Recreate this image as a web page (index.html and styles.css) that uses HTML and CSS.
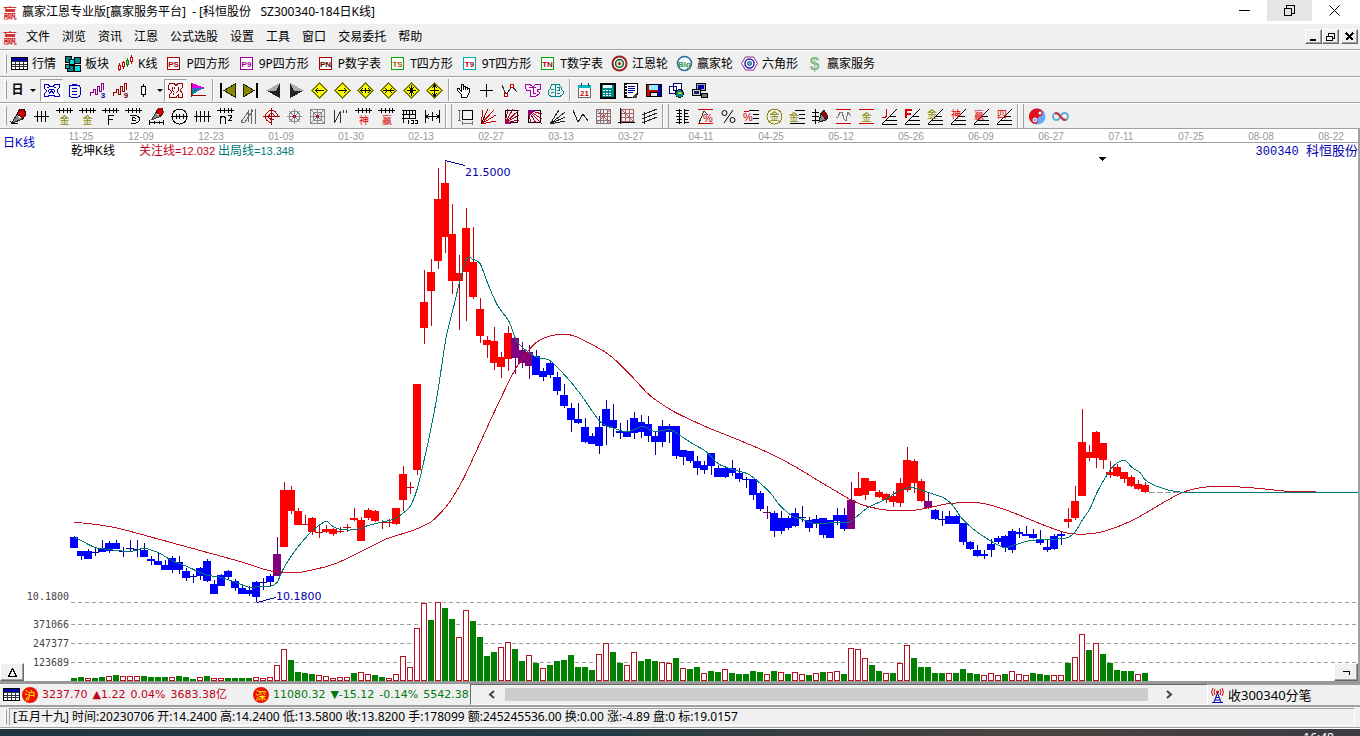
FILE: index.html
```html
<!DOCTYPE html>
<html lang="zh-CN">
<head>
<meta charset="utf-8">
<title>赢家江恩专业版</title>
<link rel="stylesheet" href="styles.css">
</head>
<body>
<svg class="sprite" aria-hidden="true">
<defs>
<g id="comb"><path d="M0 2.500H17M3.500 0V5M7.500 0V5M11.500 0V5M14.500 0V5" stroke="#000"/></g>
<g id="fan"><path d="M1 16 16 1M1 16.500H16M5 12.500H16M9 8.500H15" stroke="#000"/></g>
<g id="pen"><path d="M2 15 7 6 13 11Z" fill="#888" stroke="#222"/><path d="M7 6 10 1 14 1 16 6 13 11Z" fill="#c00" stroke="#300"/><path d="M8 8 11 10" stroke="#fff"/></g>
<g id="diamond"><path d="M8.500 1 16 8.500 8.500 16 1 8.500Z" fill="#ff0" stroke="#770"/></g>
<symbol id="table" viewBox="0 0 17 17"><path d="M.5 2.500H16.500V14.500H.5Z" fill="#fff" stroke="#000"/><path d="M1 3H16V5.500H1Z" fill="#00a"/><path d="M1 6.500H16M1 9H16M1 11.500H16M4.500 6V14M8.500 6V14M12.500 6V14" stroke="#333"/></symbol>
<symbol id="blocks" viewBox="0 0 17 17"><g stroke="#000"><path d="M1 1H7V7H1ZM10 2H16V8H10ZM3 10H9V16H3Z" fill="#088"/><path d="M5 4H10V9H5ZM10 10H16V16H10Z" fill="#0dd"/><path d="M1 9H5V13H1Z" fill="#0aa"/></g></symbol>
<symbol id="kline" viewBox="0 0 17 17"><path d="M2.500 8V16M6.500 6V14M14.500 0V9" stroke="#c00"/><path d="M1.500 10.500H3.500V14.500H1.500ZM5.500 7.500H7.500V11.500H5.500ZM13.500 2.500H15.500V6.500H13.500Z" fill="#fff" stroke="#c00"/><path d="M10.500 3V12" stroke="#080"/><path d="M9.500 5.500H11.500V9.500H9.500Z" fill="#8c8" stroke="#080"/></symbol>
<symbol id="ps" viewBox="0 0 17 17"><path d="M2.500 2.500H14.500V14.500H2.500Z" fill="#fff" stroke="#a00"/><text x="8.500" y="12" class="tag" fill="#a00">PS</text></symbol>
<symbol id="p9" viewBox="0 0 17 17"><path d="M2.500 2.500H14.500V14.500H2.500Z" fill="#fff" stroke="#909"/><text x="8.500" y="12" class="tag" fill="#909">P9</text></symbol>
<symbol id="pn" viewBox="0 0 17 17"><path d="M2.500 2.500H14.500V14.500H2.500Z" fill="#fff" stroke="#a00"/><text x="8.500" y="12" class="tag" fill="#400">PN</text></symbol>
<symbol id="ts" viewBox="0 0 17 17"><path d="M2.500 2.500H14.500V14.500H2.500Z" fill="#fff" stroke="#0a0"/><text x="8.500" y="12" class="tag" fill="#a50">TS</text></symbol>
<symbol id="t9" viewBox="0 0 17 17"><path d="M2.500 2.500H14.500V14.500H2.500Z" fill="#fff" stroke="#0aa"/><text x="8.500" y="12" class="tag" fill="#a02">T9</text></symbol>
<symbol id="tn" viewBox="0 0 17 17"><path d="M2.500 2.500H14.500V14.500H2.500Z" fill="#fff" stroke="#0a0"/><text x="8.500" y="12" class="tag" fill="#a02">TN</text></symbol>
<symbol id="wheel" viewBox="0 0 17 17"><circle cx="8.500" cy="8.500" r="7" fill="#fff" stroke="#922" stroke-width="2"/><circle cx="8.500" cy="8.500" r="4" fill="#cec" stroke="#253" stroke-width="1.500"/><circle cx="8.500" cy="8.500" r="1.500" fill="#b22"/></symbol>
<symbol id="big" viewBox="0 0 17 17"><circle cx="8.500" cy="8.500" r="7" fill="#eff" stroke="#369" stroke-width="1.500"/><text x="8.500" y="12" class="tag" fill="#384">Big</text></symbol>
<symbol id="hex" viewBox="0 0 17 17"><path d="M4.500 2H12.500L16.500 8.500 12.500 15H4.500L.5 8.500Z" fill="#fff" stroke="#927"/><circle cx="8.500" cy="8.500" r="4.500" fill="none" stroke="#22b" stroke-width="1.500"/><circle cx="8.500" cy="8.500" r="2" fill="#6bd" stroke="#248"/></symbol>
<symbol id="dollar" viewBox="0 0 17 17"><text x="8.500" y="15" class="money" fill="#8b8">$</text></symbol>

<symbol id="maze" viewBox="0 0 17 17"><path d="M1 2.500H5L7 4.500H10L12 2.500H16V6L14 8V10L16 12V14.500H12L11 13H6L5 14.500H1V12L3 10V8L1 6ZM5 9.500 7 7H10L12 9.500M6 11.500 8.500 9 11 11.500M4 5.500H6M11 5.500H13" fill="none" stroke="#00c"/></symbol>
<symbol id="clip" viewBox="0 0 17 17"><rect x="3" y="3" width="11" height="12" rx="2" fill="none" stroke="#00c"/><path d="M6 2.500H11M6 6.500H11M6 9.500H11M6 12H11" stroke="#00c"/></symbol>
<symbol id="wave3" viewBox="0 0 17 17"><path d="M1.500 14V10.500H4.500V7.500H6.500V12.500H8.500V4.500H10.500V9.500H12.500V1.500H14.500V8" fill="none" stroke="#808"/><text x="14" y="16" class="tag" fill="#00a">3</text></symbol>
<symbol id="wave9" viewBox="0 0 17 17"><path d="M1.500 14V10.500H4.500V7.500H6.500V12.500H8.500V4.500H10.500V9.500H12.500V1.500H14.500V8" fill="none" stroke="#900"/><text x="14" y="16" class="tag" fill="#600">9</text></symbol>
<symbol id="onebar" viewBox="0 0 17 17"><path d="M8.500 2V15" stroke="#000"/><path d="M6.500 4.500H10.500V12.500H6.500Z" fill="#fff" stroke="#000"/></symbol>
<symbol id="puzzle" viewBox="0 0 17 17"><path d="M3 1.500H7L9 3.500 11 1.500H15V6L13 8L15 11V15.500H11V13L9 15.500H3L2 13L4 11V9L1.500 7V4ZM5 5V8L7 10M8 5 7 7M6 13V11M11 5V9L9 11" fill="none" stroke="#900"/></symbol>
<symbol id="flag" viewBox="0 0 17 17"><path d="M2 1 15 6H2Z" fill="#d0d"/><path d="M2 6H15L8 9H2Z" fill="#36b"/><path d="M2 9H8L2 13Z" fill="#088"/><path d="M1.500 1V14.500M1 13.500H16" stroke="#900"/></symbol>
<symbol id="first" viewBox="0 0 17 17"><path d="M2 1V16" stroke="#000" stroke-width="2"/><path d="M16 2V15L5 8.500Z" fill="#880" stroke="#220"/></symbol>
<symbol id="last" viewBox="0 0 17 17"><path d="M15 1V16" stroke="#000" stroke-width="2"/><path d="M1 2V15L12 8.500Z" fill="#880" stroke="#220"/></symbol>
<symbol id="prev" viewBox="0 0 17 17"><path d="M15 1 1 8.500H11Z" fill="#aaa"/><path d="M1 8.500 15 16V1L11 8.500Z" fill="#222"/></symbol>
<symbol id="next" viewBox="0 0 17 17"><path d="M2 1 16 8.500H6Z" fill="#aaa"/><path d="M16 8.500 2 16V1L6 8.500Z" fill="#222"/></symbol>
<symbol id="d1" viewBox="0 0 17 17"><use href="#diamond"/><path d="M4 8.500H13M7 6 4.500 8.500 7 11" fill="none" stroke="#000"/></symbol>
<symbol id="d2" viewBox="0 0 17 17"><use href="#diamond"/><path d="M4 8.500H13M10 6 12.500 8.500 10 11" fill="none" stroke="#000"/></symbol>
<symbol id="d3" viewBox="0 0 17 17"><use href="#diamond"/><path d="M4 8.500H13M6 6 4 8.500 6 11M11 6 13 8.500 11 11M8.500 6V11" fill="none" stroke="#000"/></symbol>
<symbol id="d4" viewBox="0 0 17 17"><use href="#diamond"/><path d="M3 8.500H14M5 6 7.500 8.500 5 11M12 6 9.500 8.500 12 11" fill="none" stroke="#000"/></symbol>
<symbol id="d5" viewBox="0 0 17 17"><use href="#diamond"/><path d="M4 8.500H13M8.500 3V14M6 5 8.500 8 11 5M6 12 8.500 9 11 12" fill="none" stroke="#000"/></symbol>
<symbol id="d6" viewBox="0 0 17 17"><use href="#diamond"/><path d="M4 8.500H13M8.500 3V14M6 6 8.500 3 11 6M6 11 8.500 14 11 11" fill="none" stroke="#000"/></symbol>
<symbol id="hand" viewBox="0 0 17 17"><path d="M6 15V12L2 8V6.500H4L6 9V2H8V8 4H10V8 5H12V8 6H14V11L12 15Z" fill="#fff" stroke="#000"/></symbol>
<symbol id="cross" viewBox="0 0 17 17"><path d="M8.500 2V15M2 8.500H15" stroke="#000"/></symbol>
<symbol id="nodes" viewBox="0 0 17 17"><path d="M1 3 5 13 11 4 16 10" fill="none" stroke="#333"/><g fill="#fff" stroke="#c00"><circle cx="5" cy="13" r="2"/><circle cx="11" cy="4" r="2"/></g></symbol>
<symbol id="shirt" viewBox="0 0 17 17"><path d="M1.500 2.500H6L8 4H10L12 2.500H16.500V7.500H13V9L15 10V12L11 14.500H6V8.500H3L1.500 6.500ZM5 5.500H12M9 6V11H12" fill="none" stroke="#a0a"/></symbol>
<symbol id="brain" viewBox="0 0 17 17"><path d="M8 1.500V15M8 2.500H5L3 5V7L1 9V12L4 14.500H8M9 2.500H12L14 5V7L16 9V12L13 14.500H9M4 7.500H7M4 10.500H7M10 5.500H12V8.500H10M10 11.500H13" fill="none" stroke="#088"/></symbol>
<symbol id="cal" viewBox="0 0 17 17"><path d="M2.500 3.500H14.500V15.500H2.500Z" fill="#fff" stroke="#666"/><path d="M2 3H15V6H2Z" fill="#0bb"/><path d="M5 1V4M12 1V4" stroke="#333"/><text x="8.500" y="14" class="tag" fill="#c00">21</text></symbol>
<symbol id="calc" viewBox="0 0 17 17"><path d="M1.500 1.500H15.500V15.500H1.500Z" fill="#088" stroke="#000" stroke-width="2"/><path d="M4 3H13V6H4Z" fill="#dff"/><path d="M4 8.500H13M4 11H13M4 13.500H13" stroke="#fff" stroke-dasharray="2 1"/></symbol>
<symbol id="note" viewBox="0 0 17 17"><path d="M2.500 1.500H15.500V12L12 15.500H2.500Z" fill="#fff" stroke="#000"/><path d="M3.500 1V16" stroke="#000" stroke-width="2" stroke-dasharray="2 1"/><path d="M6 4.500H13M6 6.500H13M6 8.500H13M6 10.500H11" stroke="#00a"/><path d="M15 10V16H9Z" fill="#444"/></symbol>
<symbol id="disk" viewBox="0 0 17 17"><path d="M1.500 2.500H16V14.500H1.500Z" fill="#c00" stroke="#000"/><path d="M4 3H13V8H4Z" fill="#8ef"/><path d="M13 3H16V14H13Z" fill="#00a"/><path d="M5 10H12V14H5Z" fill="#eee" stroke="#000"/></symbol>
<symbol id="globe" viewBox="0 0 17 17"><path d="M5.500 1.500H13.500V8.500H5.500ZM1.500 4.500H8.500V11.500H1.500Z" fill="#fff" stroke="#008"/><circle cx="11.500" cy="11.500" r="4" fill="#088" stroke="#000"/><path d="M9 12 12 9 14 12Z" fill="#dd0"/></symbol>
<symbol id="pcs" viewBox="0 0 17 17"><path d="M5.500 1.500H14.500V8.500H5.500Z" fill="#aac" stroke="#000"/><path d="M7 3H13V7H7Z" fill="#00a"/><path d="M1.500 7.500H9.500V13.500H1.500Z" fill="#ccc" stroke="#000"/><path d="M3 9H8V12H3Z" fill="#226"/><path d="M10 11H16V15H10Z" fill="#777" stroke="#000"/></symbol>

<symbol id="pencil" viewBox="0 0 17 17"><use href="#pen"/><path d="M0 13Q3 17 8 15" fill="none" stroke="#000"/></symbol>
<symbol id="ticks" viewBox="0 0 17 17"><path d="M1 8.500H16M4.500 3V14M8.500 3V14M12.500 3V14" stroke="#000"/></symbol>
<symbol id="goldA" viewBox="0 0 17 17"><use href="#comb"/><text x="8.500" y="16" class="han" fill="#880">金</text></symbol>
<symbol id="combF" viewBox="0 0 17 17"><use href="#comb"/><path d="M6.500 17V7.500H12M6.500 11.500H11" fill="none" stroke="#000"/></symbol>
<symbol id="spiral" viewBox="0 0 17 17"><use href="#comb"/><path d="M5 7.500H11Q16 9 14 13Q12 16 6 15.500M11 11Q8 8 7 11Q8 14 11 12" fill="none" stroke="#000"/></symbol>
<symbol id="penline" viewBox="0 0 17 17"><g transform="translate(2 -1) scale(.85)"><use href="#pen"/></g><path d="M1 14.500H16M1.500 12V17M15.500 12V17M6 13V16M11 13V16" stroke="#000"/></symbol>
<symbol id="roundTicks" viewBox="0 0 17 17"><circle cx="8.500" cy="8.500" r="7.500" fill="none" stroke="#000"/><path d="M0 8.500H17M5 6V11M8.500 6V11M12 6V11" stroke="#000"/></symbol>
<symbol id="ticks4" viewBox="0 0 17 17"><path d="M0 8.500H17M2.500 3V14M6.500 3V14M10.500 3V14M14.500 3V14" stroke="#000"/></symbol>
<symbol id="nsq" viewBox="0 0 17 17"><use href="#comb"/><path d="M3.500 16V8M3.500 10 5 8.500H7L8.500 10V16M11 7.500H14.500V9L11.500 12.500H15" fill="none" stroke="#000"/></symbol>
<symbol id="slant" viewBox="0 0 17 17"><path d="M1 14 8 4V14M1 14H5L13 2M11.500 1V16M15.500 1V16" fill="none" stroke="#666"/></symbol>
<symbol id="target" viewBox="0 0 17 17"><path d="M0 8.500H17M8.500 0V17" stroke="#a00"/><path d="M14.500 8A6 6 0 1 0 8 14.500M11.500 8Q11 5.500 8 5.500Q5 7 6 10Q8 12 11 11" fill="none" stroke="#a00"/></symbol>
<symbol id="gannRound" viewBox="0 0 17 17"><path d="M1 8.500H16M8.500 1V16M3 3 14 14M14 3 3 14" stroke="#888"/><circle cx="8.500" cy="8.500" r="5.500" fill="none" stroke="#888"/><circle cx="8.500" cy="8.500" r="2" fill="#a23"/></symbol>
<symbol id="gannSquare" viewBox="0 0 17 17"><path d="M1.500 1.500H15.500V15.500H1.500ZM4.500 4.500H12.500V12.500H4.500ZM1 1 16 16M16 1 1 16M8.500 1V16M1 8.500H16" fill="none" stroke="#888"/><path d="M7 7H10V10H7Z" fill="#a23"/></symbol>
<symbol id="nmark" viewBox="0 0 17 17"><path d="M2.500 2V15L8.500 3V15M11.500 2V5M14.500 2V5" fill="none" stroke="#333"/></symbol>
<symbol id="combShen" viewBox="0 0 17 17"><use href="#comb"/><text x="9" y="16" class="han" fill="#d00">神</text></symbol>
<symbol id="combYing" viewBox="0 0 17 17"><use href="#comb"/><text x="9" y="16" class="han" fill="#d00">赢</text></symbol>
<symbol id="ruler" viewBox="0 0 17 17"><path d="M1 2.500H15M1 6.500H15M1 10.500H15M2.500 2V15M5.500 2V6M8.500 2V10M11.500 2V6M14.500 2V10M7.500 12V16M10 12.500H12V15.500H10M14 12.500H16V15.500H14" fill="none" stroke="#000"/></symbol>
<symbol id="span" viewBox="0 0 17 17"><path d="M1.500 2V15M15.500 2V15M8.500 4V13M2 8.500H15M5 6 2 8.500 5 11M12 6 15 8.500 12 11" fill="none" stroke="#000"/></symbol>
<symbol id="crop" viewBox="0 0 17 17"><path d="M5.500 2.500H15.500V11.500H5.500Z" fill="none" stroke="#000"/><path d="M2.500 2V12M1 2.500H4M1 12H4M5 15H16M5.500 13V17M15.500 13V17" stroke="#777"/></symbol>
<symbol id="rays" viewBox="0 0 17 17"><path d="M1 16 3 2M1 16 8 1M1 16 14 2M1 16 16 7M1 16 16 13" stroke="#c00"/><path d="M1 16 5 8" stroke="#000"/></symbol>
<symbol id="rayBox" viewBox="0 0 17 17"><path d="M2.500 2.500H14.500V14.500H2.500Z" fill="none" stroke="#000"/><path d="M2 15 5 1M2 15 10 1M2 15 16 2M2 15 16 7M2 15 16 12" stroke="#a02"/><path d="M2 10 7 15M2 15H8" stroke="#a0a"/></symbol>
<symbol id="rayBox2" viewBox="0 0 17 17"><path d="M2.500 2.500H14.500V14.500H2.500Z" fill="none" stroke="#000"/><path d="M2 2 5 15M2 2 10 15M2 2 16 16M2 2 16 11M2 2 16 6" stroke="#a02"/><path d="M2 3H9M3 2V8" stroke="#808" stroke-width="2"/></symbol>
<symbol id="rays3" viewBox="0 0 17 17"><path d="M1 16 10 2M1 16 16 4M1 16 16 9M1 16 16 13" stroke="#222"/></symbol>
<symbol id="vee" viewBox="0 0 17 17"><path d="M1 2 6 14 11 6 16 13" fill="none" stroke="#222"/></symbol>
<symbol id="grid" viewBox="0 0 17 17"><path d="M1.500 1.500H15.500V15.500H1.500ZM1 5H16M1 12H16M5 1V16M12 1V16" fill="none" stroke="#777"/><path d="M8.500 1V16M1 8.500H16M1 1 16 16M16 1 1 16" stroke="#b66"/></symbol>
<symbol id="grid2" viewBox="0 0 17 17"><path d="M3.500 1.500H15.500V13.500H3.500ZM3 5H16M3 9.500H16M7.500 1V14M11.500 1V14M3 1 16 14" fill="none" stroke="#a66"/><path d="M2.500 0V16M0 14.500H17" stroke="#000"/></symbol>
<symbol id="channels" viewBox="0 0 17 17"><path d="M1 7 16 1M1 11 16 5M1 15 16 9M3.500 4V16" stroke="#222"/></symbol>
<symbol id="ladder" viewBox="0 0 17 17"><path d="M5.500 1V16M10.500 1V16M2 2.500H8M3 5.500H8M2 8.500H8M3 11.500H8M2 14.500H8M10 2.500H15M10 5.500H14M10 8.500H15M10 11.500H14M10 14.500H15" stroke="#000"/></symbol>
<symbol id="pctFan" viewBox="0 0 17 17"><path d="M1 1.500H16M1 15.500H16" stroke="#c00"/><path d="M2 15 7 3 11 7" fill="none" stroke="#333"/><text x="11" y="14" class="sign" fill="#c00">%</text></symbol>
<symbol id="pct" viewBox="0 0 17 17"><path d="M13 2 4 15" stroke="#000"/><g fill="none" stroke="#000"><circle cx="4.500" cy="5" r="2.500"/><circle cx="12.500" cy="12" r="2.500"/></g></symbol>
<symbol id="pctLines" viewBox="0 0 17 17"><path d="M6 2.500H16M10 6.500H16M10 10.500H16M1 15.500H16" stroke="#000"/><path d="M1 3.500H6" stroke="#c00"/><text x="5" y="13" class="sign" fill="#c00">%</text></symbol>
<symbol id="goldRound" viewBox="0 0 17 17"><circle cx="8.500" cy="8.500" r="7.500" fill="none" stroke="#880"/><text x="8.500" y="12" class="han" fill="#880">金</text></symbol>
<symbol id="goldLines" viewBox="0 0 17 17"><path d="M6 2.500H16M10 6.500H16M10 10.500H16M1 15.500H16" stroke="#000"/><text x="5" y="13" class="han" fill="#880">金</text></symbol>
<symbol id="penTicks" viewBox="0 0 17 17"><path d="M3.500 1V16M0 4.500H7M0 8.500H7M0 12.500H7" stroke="#000"/><path d="M7 14 9 5 14 12Z" fill="#888" stroke="#222"/><path d="M9 5 12 2 16 9 14 12Z" fill="#a00" stroke="#222"/></symbol>
<symbol id="sine" viewBox="0 0 17 17"><path d="M1 1.500H16M1 15.500H16" stroke="#c00"/><path d="M1 9H3L5 4H7L9 11 11 13 13 4 16 8" fill="none" stroke="#777"/></symbol>
<symbol id="goldBand" viewBox="0 0 17 17"><path d="M1 1.500H16M1 15.500H16" stroke="#c00"/><text x="8.500" y="13" class="han" fill="#880">金</text></symbol>
<symbol id="fanJ" viewBox="0 0 17 17"><use href="#fan"/><path d="M5.500 1V8L4 9.500H1" fill="none" stroke="#c00"/></symbol>
<symbol id="fanF" viewBox="0 0 17 17"><use href="#fan"/><path d="M2 10V2H8M2 6H7" fill="none" stroke="#c00" stroke-width="2"/></symbol>
<symbol id="fanGold" viewBox="0 0 17 17"><use href="#fan"/><text x="5" y="10" class="han" fill="#880">金</text></symbol>
<symbol id="fanShen" viewBox="0 0 17 17"><use href="#fan"/><text x="6" y="10" class="han" fill="#d00">神</text></symbol>
<symbol id="fanYing" viewBox="0 0 17 17"><use href="#fan"/><text x="6" y="11" class="han" fill="#d00">赢</text></symbol>
<symbol id="fanFour" viewBox="0 0 17 17"><use href="#fan"/><text x="6" y="10" class="han" fill="#d00">四</text></symbol>
<symbol id="taiji" viewBox="0 0 17 17"><circle cx="8.500" cy="8.500" r="8" fill="#6af"/><path d="M11 1A8 8 0 1 0 5 16Q9 16 9 12Q8 9 12 8Q16 5 11 1Z" fill="#d12"/><circle cx="6" cy="12" r="2" fill="#6af" stroke="#fff"/><circle cx="11" cy="5" r="1.500" fill="#fff"/></symbol>
<symbol id="loop" viewBox="0 0 17 17"><g fill="none" stroke="#6ac" stroke-width="2"><circle cx="4.500" cy="8.500" r="3.500"/><circle cx="12.500" cy="8.500" r="3.500"/></g><path d="M3 5Q6 5 8.500 8.500T14 12" fill="none" stroke="#c33" stroke-width="2"/></symbol>
<symbol id="tower" viewBox="0 0 13 17"><path d="M6.500 6 3 15M6.500 6 10 15M5 10.500H8M4 13H9M1 15.500H12" fill="none" stroke="#00a"/><path d="M4 2Q2 5 4 8M9 2Q11 5 9 8M2 1Q-1 5 2 9M11 1Q14 5 11 9" fill="none" stroke="#c00"/><circle cx="6.500" cy="5" r="1.500" fill="#c00"/></symbol>
</defs>
</svg>

<header class="titlebar">
  <span class="logo">赢</span>
  <h1 class="title">赢家江恩专业版[赢家服务平台]&nbsp; - [科恒股份&nbsp; &nbsp;SZ300340-184日K线]</h1>
  <div class="winbtns">
    <button class="win" aria-label="最小化"><svg width="11" height="11"><path d="M0 5.500H11" stroke="#000"/></svg></button>
    <button class="win hot" aria-label="还原"><svg width="11" height="11"><path d="M.5 3.500H7.500V10.500H.5ZM2.500 3V.5H10.500V8.500H8" fill="none" stroke="#000"/></svg></button>
    <button class="win" aria-label="关闭"><svg width="11" height="11" class="smooth"><path d="M.5.5 10.500 10.500M10.500.5.5 10.500" stroke="#000"/></svg></button>
  </div>
</header>

<nav class="menubar">
  <span class="logo">赢</span>
  <button>文件</button><button>浏览</button><button>资讯</button><button>江恩</button><button>公式选股</button><button>设置</button><button>工具</button><button>窗口</button><button>交易委托</button><button>帮助</button>
  <div class="mdi">
    <button class="raised" aria-label="最小化窗口"><svg width="9" height="9"><path d="M1 8H7" stroke="#000" stroke-width="2"/></svg></button>
    <button class="raised" aria-label="还原窗口"><svg width="9" height="9"><path d="M.5 4.500H6.500V8.500H.5ZM2.500 4V1.500H8.500V6.500H7M.5 4H7M2 1H9" fill="none" stroke="#000"/></svg></button>
    <button class="raised apart" aria-label="关闭窗口"><svg width="9" height="9"><path d="M1 1 8 8M8 1 1 8" stroke="#000" stroke-width="2"/></svg></button>
  </div>
</nav>

<div class="toolbar first" role="toolbar" aria-label="功能">
  <i class="grip"></i>
  <button><svg class="ico"><use href="#table"/></svg>行情</button>
  <button><svg class="ico"><use href="#blocks"/></svg>板块</button>
  <button><svg class="ico"><use href="#kline"/></svg>K线</button>
  <button><svg class="ico"><use href="#ps"/></svg>P四方形</button>
  <button><svg class="ico"><use href="#p9"/></svg>9P四方形</button>
  <button><svg class="ico"><use href="#pn"/></svg>P数字表</button>
  <button><svg class="ico"><use href="#ts"/></svg>T四方形</button>
  <button><svg class="ico"><use href="#t9"/></svg>9T四方形</button>
  <button><svg class="ico"><use href="#tn"/></svg>T数字表</button>
  <button><svg class="ico smooth"><use href="#wheel"/></svg>江恩轮</button>
  <button><svg class="ico smooth"><use href="#big"/></svg>赢家轮</button>
  <button><svg class="ico smooth"><use href="#hex"/></svg>六角形</button>
  <button><svg class="ico smooth"><use href="#dollar"/></svg>赢家服务</button>
</div>

<div class="toolbar icons" role="toolbar" aria-label="视图">
  <i class="grip"></i>
  <button class="period">日<i class="caret"></i></button>
  <button class="pressed" aria-label="指标"><svg class="ico"><use href="#maze"/></svg></button>
  <button aria-label="记录"><svg class="ico"><use href="#clip"/></svg></button>
  <button aria-label="三浪"><svg class="ico"><use href="#wave3"/></svg></button>
  <button aria-label="九浪"><svg class="ico"><use href="#wave9"/></svg></button>
  <button aria-label="K线样式"><svg class="ico"><use href="#onebar"/></svg></button>
  <button class="drop" aria-label="样式列表"><i class="caret"></i></button>
  <button class="pressed" aria-label="图形"><svg class="ico"><use href="#puzzle"/></svg></button>
  <button aria-label="分布"><svg class="ico"><use href="#flag"/></svg></button>
  <i class="sep"></i>
  <button aria-label="首页"><svg class="ico"><use href="#first"/></svg></button>
  <button aria-label="末页"><svg class="ico"><use href="#last"/></svg></button>
  <button aria-label="上一个"><svg class="ico"><use href="#prev"/></svg></button>
  <button aria-label="下一个"><svg class="ico"><use href="#next"/></svg></button>
  <button aria-label="左移"><svg class="ico"><use href="#d1"/></svg></button>
  <button aria-label="右移"><svg class="ico"><use href="#d2"/></svg></button>
  <button aria-label="横向放大"><svg class="ico"><use href="#d3"/></svg></button>
  <button aria-label="横向缩小"><svg class="ico"><use href="#d4"/></svg></button>
  <button aria-label="缩小"><svg class="ico"><use href="#d5"/></svg></button>
  <button aria-label="放大"><svg class="ico"><use href="#d6"/></svg></button>
  <i class="sep"></i>
  <button aria-label="拖动"><svg class="ico"><use href="#hand"/></svg></button>
  <button aria-label="十字光标"><svg class="ico"><use href="#cross"/></svg></button>
  <button aria-label="节点"><svg class="ico"><use href="#nodes"/></svg></button>
  <button aria-label="模板"><svg class="ico"><use href="#shirt"/></svg></button>
  <button aria-label="智能"><svg class="ico"><use href="#brain"/></svg></button>
  <i class="sep"></i>
  <button aria-label="日历"><svg class="ico"><use href="#cal"/></svg></button>
  <button aria-label="计算器"><svg class="ico"><use href="#calc"/></svg></button>
  <button aria-label="记事本"><svg class="ico"><use href="#note"/></svg></button>
  <button aria-label="保存"><svg class="ico"><use href="#disk"/></svg></button>
  <button aria-label="网络"><svg class="ico"><use href="#globe"/></svg></button>
  <button aria-label="连接"><svg class="ico"><use href="#pcs"/></svg></button>
</div>

<div class="toolbar icons" role="toolbar" aria-label="画线">
  <i class="grip"></i>
  <button aria-label="画笔"><svg class="ico"><use href="#pencil"/></svg></button>
  <button aria-label="周期线"><svg class="ico"><use href="#ticks"/></svg></button>
  <button aria-label="黄金周期"><svg class="ico"><use href="#goldA"/></svg></button>
  <button aria-label="黄金时间"><svg class="ico"><use href="#goldA"/></svg></button>
  <button aria-label="斐波那契"><svg class="ico"><use href="#combF"/></svg></button>
  <button aria-label="螺旋"><svg class="ico"><use href="#spiral"/></svg></button>
  <button aria-label="画线段"><svg class="ico"><use href="#penline"/></svg></button>
  <button aria-label="圆周期"><svg class="ico"><use href="#roundTicks"/></svg></button>
  <button aria-label="等分"><svg class="ico"><use href="#ticks4"/></svg></button>
  <button aria-label="平方周期"><svg class="ico"><use href="#nsq"/></svg></button>
  <button aria-label="角度"><svg class="ico"><use href="#slant"/></svg></button>
  <button aria-label="轮中轮"><svg class="ico"><use href="#target"/></svg></button>
  <button aria-label="圆图"><svg class="ico"><use href="#gannRound"/></svg></button>
  <button aria-label="方图"><svg class="ico"><use href="#gannSquare"/></svg></button>
  <button aria-label="N形"><svg class="ico"><use href="#nmark"/></svg></button>
  <button aria-label="神奇周期"><svg class="ico"><use href="#combShen"/></svg></button>
  <button aria-label="赢家周期"><svg class="ico"><use href="#combYing"/></svg></button>
  <button aria-label="标尺"><svg class="ico"><use href="#ruler"/></svg></button>
  <button aria-label="区间"><svg class="ico"><use href="#span"/></svg></button>
  <i class="split"></i>
  <button aria-label="矩形"><svg class="ico"><use href="#crop"/></svg></button>
  <button aria-label="射线"><svg class="ico"><use href="#rays"/></svg></button>
  <button aria-label="上升方形"><svg class="ico"><use href="#rayBox"/></svg></button>
  <button aria-label="下降方形"><svg class="ico"><use href="#rayBox2"/></svg></button>
  <button aria-label="速阻线"><svg class="ico"><use href="#rays3"/></svg></button>
  <button aria-label="折线"><svg class="ico"><use href="#vee"/></svg></button>
  <button aria-label="网格"><svg class="ico"><use href="#grid"/></svg></button>
  <button aria-label="坐标网格"><svg class="ico"><use href="#grid2"/></svg></button>
  <button aria-label="通道"><svg class="ico"><use href="#channels"/></svg></button>
  <i class="split"></i>
  <button aria-label="刻度"><svg class="ico"><use href="#ladder"/></svg></button>
  <button aria-label="百分比波段"><svg class="ico"><use href="#pctFan"/></svg></button>
  <button aria-label="百分比"><svg class="ico smooth"><use href="#pct"/></svg></button>
  <button aria-label="百分比线"><svg class="ico"><use href="#pctLines"/></svg></button>
  <button aria-label="黄金圆"><svg class="ico"><use href="#goldRound"/></svg></button>
  <button aria-label="黄金线"><svg class="ico"><use href="#goldLines"/></svg></button>
  <button aria-label="价格笔"><svg class="ico"><use href="#penTicks"/></svg></button>
  <button aria-label="正弦"><svg class="ico"><use href="#sine"/></svg></button>
  <button aria-label="黄金带"><svg class="ico"><use href="#goldBand"/></svg></button>
  <button aria-label="江恩扇形"><svg class="ico"><use href="#fanJ"/></svg></button>
  <button aria-label="斐波扇形"><svg class="ico"><use href="#fanF"/></svg></button>
  <button aria-label="黄金扇形"><svg class="ico"><use href="#fanGold"/></svg></button>
  <button aria-label="神奇扇形"><svg class="ico"><use href="#fanShen"/></svg></button>
  <button aria-label="赢家扇形"><svg class="ico"><use href="#fanYing"/></svg></button>
  <button aria-label="四分扇形"><svg class="ico"><use href="#fanFour"/></svg></button>
  <i class="split"></i>
  <button aria-label="太极"><svg class="ico smooth"><use href="#taiji"/></svg></button>
  <button aria-label="循环"><svg class="ico smooth"><use href="#loop"/></svg></button>
</div>

<main class="chart">
  <svg id="plot" role="img" aria-label="科恒股份日K线"></svg>
  <button class="raised corner left" aria-label="展开"><svg width="9" height="9"><path d="M.5 8.500H8.500L4.500 .5Z" fill="none" stroke="#000"/></svg></button>
  <button class="raised corner right" aria-label="收起"><svg width="9" height="9"><path d="M1 3.500H7.500V7" fill="none" stroke="#000"/></svg></button>
</main>

<section class="ticker">
  <div class="quotes">
    <svg class="ico"><use href="#table"/></svg>
    <span class="badge">沪</span>
    <div class="up"><span>3237.70</span><span>▲1.22</span><span>0.04%</span><span>3683.38亿</span></div>
    <span class="badge second">深</span>
    <div class="down"><span>11080.32</span><span>▼-15.12</span><span>-0.14%</span><span>5542.38</span></div>
  </div>
  <div class="scroller">
    <button class="arrow" aria-label="向左"><svg width="8" height="9" class="smooth"><path d="M6 1 2 4.500 6 8" fill="none" stroke="#444" stroke-width="2"/></svg></button>
    <div class="thumb"></div>
    <button class="arrow" aria-label="向右"><svg width="8" height="9" class="smooth"><path d="M2 1 6 4.500 2 8" fill="none" stroke="#444" stroke-width="2"/></svg></button>
  </div>
  <div class="feed"><svg width="13" height="17" class="smooth"><use href="#tower"/></svg>收300340分笔</div>
</section>

<footer class="status">
  <i class="grip"></i>
  <p>[五月十九] 时间:20230706 开:14.2400 高:14.2400 低:13.5800 收:13.8200 手:178099 额:245245536.00 换:0.00 涨:-4.89 盘:0 标:19.0157</p>
</footer>
<div class="taskbar"><span>16:48</span></div>
<script src="chart.js"></script>
</body>
</html>
```
FILE: styles.css
```css
* { box-sizing: border-box; }
body {
  margin: 0;
  height: 100vh;
  display: flex;
  flex-direction: column;
  overflow: hidden;
  background: #f0f0f0;
  color: #000;
  font: 12px/16px "Noto Sans", "Noto Sans CJK SC", sans-serif;
}
button { border: 0; padding: 0; margin: 0; background: none; color: inherit; font: inherit; }
svg { display: block; flex: none; shape-rendering: crispEdges; }
.smooth { shape-rendering: auto; }
.sprite { position: absolute; width: 0; height: 0; }
.ico { width: 17px; height: 17px; }
.tag { font: bold 8px "Liberation Sans", sans-serif; text-anchor: middle; }
.sign { font: 11px "Liberation Sans", sans-serif; text-anchor: middle; }
.han { font: 10px "Noto Sans CJK SC", sans-serif; text-anchor: middle; }
.money { font: bold 18px "Liberation Sans", sans-serif; text-anchor: middle; }
.logo { width: 16px; margin-right: 3px; color: #c00; font: 14px/18px "Noto Sans CJK SC", sans-serif; }

.titlebar { flex: none; height: 24px; padding-left: 3px; display: flex; align-items: center; background: #fff; }
.title { margin: 0; font-size: 12px; font-weight: normal; }
.winbtns { margin-left: auto; display: flex; align-self: flex-start; padding-right: 3px; }
.win { width: 45px; height: 21px; display: flex; align-items: center; justify-content: center; }
.hot { background: #e5e5e5; }

.menubar { flex: none; height: 26px; padding: 0 2px 0 3px; display: flex; align-items: center; border-bottom: 1px solid #a0a0a0; }
.menubar > button { padding: 0 8px 0 4px; }
.mdi { margin-left: auto; display: flex; }
.raised {
  display: flex; align-items: center; justify-content: center;
  background: #f0f0f0;
  border: 1px solid; border-color: #fff #696969 #696969 #fff;
  box-shadow: inset -1px -1px #a0a0a0;
}
.mdi .raised { width: 17px; height: 15px; }
.mdi .apart { margin-left: 2px; }

.toolbar { flex: none; height: 26px; display: flex; align-items: center; border-top: 1px solid #fff; border-bottom: 1px solid #a0a0a0; }
.toolbar.first { height: 27px; gap: 8px; }
.first button { display: flex; align-items: center; gap: 4px; white-space: nowrap; }
.first .grip { margin-right: -4px; }
.grip { flex: none; width: 3px; height: 20px; margin-left: 4px; border: 1px solid; border-color: #fff #a0a0a0 #fff #fff; }
.icons button { flex: none; width: 23px; height: 23px; display: flex; align-items: center; justify-content: center; }
.icons .period { width: 33px; gap: 6px; font-weight: bold; }
.icons .drop { width: 9px; }
.icons .pressed { border: 1px solid; border-color: #a0a0a0 #fff #fff #a0a0a0; background: #f8f8f8; }
.caret { border: 3px solid transparent; border-top-color: #000; border-bottom: 0; }
.sep { flex: none; width: 6px; height: 22px; border-left: 2px solid #f0f0f0; background: linear-gradient(90deg, #a0a0a0 1px, #fff 1px, #fff 2px, #f0f0f0 2px); }
.split { flex: none; width: 10px; height: 24px; background: linear-gradient(90deg, #f0f0f0 1px, #a0a0a0 1px, #a0a0a0 2px, #fff 2px, #fff 3px, #f0f0f0 3px, #f0f0f0 7px, #a0a0a0 7px, #a0a0a0 8px, #f0f0f0 8px); }

.chart { flex: 1; min-height: 0; position: relative; background: #fff; border-right: 2px solid #a0a0a0; }
#plot { width: 100%; height: 100%; }
.corner { position: absolute; bottom: 0; width: 24px; height: 18px; }
.corner.left { left: 0; }
.corner.right { right: 0; }
.axis { font: 10px "Liberation Sans", sans-serif; fill: #999; text-anchor: middle; }
.scale { font: 10px "DejaVu Sans Mono", monospace; fill: #444; text-anchor: end; }
.peak { font: 11px "DejaVu Sans", sans-serif; fill: #0000a0; }
.legend { font: 12px "Liberation Sans", "Noto Sans CJK SC", sans-serif; }
.small { font-size: 11px; }
.code { font: 12px "Liberation Mono", "Noto Sans CJK SC", monospace; fill: #0000b0; text-anchor: end; }
.large { font-size: 13px; }

.ticker { flex: none; height: 26px; display: flex; border-top: 3px solid #999; border-bottom: 2px solid #a0a0a0; }
.quotes { width: 470px; flex: none; display: flex; align-items: center; padding-left: 3px; overflow: hidden; white-space: nowrap; font: 11px/16px "DejaVu Sans", "Noto Sans CJK SC", sans-serif; }
.badge { flex: none; width: 16px; height: 16px; margin: 0 4px 0 2px; border-radius: 50%; background: #e10; color: #ff0; font: 11px/16px "Noto Sans CJK SC", sans-serif; text-align: center; }
.badge.second { margin-left: 26px; }
.up, .down { display: flex; gap: 5px; }
.up { color: #c00018; }
.down { color: #007a10; }
.scroller { flex: 1; display: flex; align-items: center; padding: 0 17px 0 0; border: 1px solid; border-color: #696969 #fff #fff #696969; }
.arrow { width: 42px; height: 17px; display: flex; align-items: center; justify-content: center; }
.scroller .arrow:first-child { width: 34px; padding-left: 8px; }
.thumb { flex: 1; height: 13px; background: #cdcdcd; }
.feed { flex: none; width: 152px; display: flex; align-items: center; gap: 4px; padding-left: 3px; font-size: 13px; border-top: 1px solid #a0a0a0; }

.status { flex: none; height: 21px; display: flex; align-items: center; gap: 2px; border-bottom: 1px solid #a0a0a0; }
.status .grip { height: 16px; }
.status p { flex: 1; margin: 0 5px 0 0; padding-left: 3px; line-height: 16px; white-space: nowrap; border: 1px solid; border-color: #a0a0a0 #fff #fff #a0a0a0; }
.taskbar { flex: none; height: 8px; padding-right: 26px; overflow: hidden; display: flex; justify-content: flex-end; color: #fff; background: linear-gradient(90deg, #20353f, #263b44 45%, #4b4340 75%, #3c3c44); border-top: 1px solid #fff; }
.taskbar span { margin-top: 1px; }
```
FILE: chart.js
```js
// Each candle: body top, body bottom, wick top, wick bottom (window pixels).
const candles = `537 548 536 548|551 556 551 560|551 559 549 559|552 553 548 556|548 552 540 552|543 551 541 553|543 549 540 549|551 552 547 557|548 549 540 551|549 550 540 557
550 557 543 557|559 561 556 565|561 565 553 565|565 570 560 570|558 570 556 573|562 570 556 574|571 578 568 581|576 577 574 583|568 576 567 580|561 581 559 582
584 594 580 594|575 586 574 586|571 577 570 580|581 588 579 591|588 594 584 594|590 594 586 596|582 597 581 602|582 583 578 590|576 582 574 586|554 576 537 576
490 547 482 547|490 511 486 514|511 525 508 525|524 525 515 525|518 532 517 535|532 533 525 538|529 532 525 533|529 534 528 536|531 532 527 533|527 528 524 532
518 520 508 521|520 541 517 541|510 518 508 520|511 521 510 522|522 523 520 529|522 523 519 527|508 524 508 525|474 500 466 511|487 488 482 494|384 470 384 475
302 328 270 344|272 291 259 326|199 261 168 269|183 237 160 253|234 281 204 294|273 281 255 330|228 272 208 321|262 297 227 299|309 336 298 343|340 345 336 358
341 363 327 370|357 367 352 378|333 359 326 371|338 358 338 374|350 363 342 368|352 366 345 379|356 375 350 375|371 377 368 381|363 375 360 378|377 391 372 395
395 406 384 408|408 420 403 432|419 423 403 424|427 442 418 443|436 444 433 444|427 446 416 454|409 426 400 445|420 428 404 437|431 433 423 439|431 437 420 437
418 433 412 439|422 432 415 438|424 436 416 442|436 442 431 455|426 442 420 447|426 432 424 443|426 456 426 459|450 457 450 465|451 461 451 463|461 468 456 475
465 470 461 474|453 466 453 475|468 477 465 477|468 477 466 478|468 473 460 476|473 479 468 482|479 480 477 488|479 495 479 500|493 509 491 511|512 513 506 519
513 531 511 537|518 531 511 534|518 528 516 530|513 526 508 527|517 518 506 522|520 528 517 532|519 523 515 528|518 535 518 538|520 538 520 538|515 521 508 525
515 529 508 531|500 529 482 529|488 496 472 496|478 495 478 500|481 491 481 491|492 497 490 498|494 500 493 503|496 502 491 507|483 503 478 507|460 490 447 492
461 483 459 493|481 501 479 502|501 508 493 509|510 519 509 520|519 520 511 526|516 524 511 524|516 524 515 524|523 542 523 545|542 549 541 550|550 556 545 557
554 556 550 559|544 550 539 557|538 542 536 544|536 547 535 552|531 550 529 553|532 534 528 538|534 536 526 536|534 538 529 539|540 543 530 545|547 550 540 552
536 549 534 550|534 536 532 545|519 522 508 528|501 518 486 520|442 496 409 496|452 458 445 461|432 458 431 468|443 460 443 469|472 475 461 478|467 476 464 477
472 479 472 483|477 486 475 487|484 489 480 490|485 492 482 493`.split(/[|\n]/).map(s => s.split(" ").map(Number));

// Volume bar heights: r = hollow rising bar, g = solid falling bar.
const volumes = `g3 g4 r3 g3 g4 r5 g6 r5 r5 r5 g5 g4 g4 g4 r4 g5 g4 g2 r4 g5 r3 r3 g3 g3 g3 g3 r4 r3 r4 r16
r32 g21 g9 g8 g7 r6 r5 r3 r4 r4 g8 r9 r7 g6 g4 r3 r7 r25 r14 r53 r78 g61 r79 g73 g62 r44 r71 g60 g44 g25
g29 r34 r39 g32 g20 r26 g18 r13 g16 g20 g21 g26 g14 g14 g11 r27 r38 g29 g18 r16 r29 g20 g22 g20 r19 r18 g23 r13 g12 g14
r8 g10 g9 r12 g8 g7 g7 g10 g9 r7 g10 r9 g7 r9 r7 g6 r8 g9 r9 r10 g7 r33 r32 r23 g16 g10 r8 g8 r18 r36
g23 g14 g14 g8 g8 r8 g8 g12 g8 g7 r6 r8 r6 g7 r10 r7 r6 g8 g7 g6 r6 r6 g18 r24 r47 g31 r38 g27 g18 g11
g10 g10 r7 g8`.split(/\s+/);

const exitLine = "74 537 81 540 95 547 109 549 130 551 144 548 158 552 172 560 187 566 205 574 221 577 236 582 250 587 258 586 270 586 277 582 283 569 293 553 305 538 315 528 326 521 333 526 341 529 357 529 368 525 380 522 393 519 400 515 410 506 417 489 424 460 431 428 438 390 446 338 454 305 460 280 467 258 473 259 480 263 487 281 497 304 509 321 517 341 530 353 540 358 550 360 566 376 580 393 600 421 612 427 625 431 635 429 643 426 655 431 670 429 680 435 694 444 706 451 718 463 732 469 747 473 758 481 770 492 780 505 793 516 803 519 815 523 835 522 849 522 858 515 868 507 885 499 900 490 912 487 925 491 943 497 952 504 962 518 975 530 990 540 1004 547 1016 544 1030 540 1050 539 1068 537 1076 530 1082 520 1090 508 1098 490 1106 476 1112 467 1118 462 1125 460 1132 467 1140 472 1146 480 1160 487 1175 491 1190 492";
const watchLine = "74 522 88 523 109 526 123 529 160 539 200 550 240 561 265 569 280 572 298 572 314 569 330 565 345 559 365 549 385 539 400 534 415 529 430 522 440 513 450 501 463 479 478 447 495 410 513 373 524 356 535 343 548 336 560 334 573 335 590 343 610 355 630 374 650 395 672 410 690 419 710 428 740 440 770 453 795 466 818 480 840 493 852 500 868 506 890 510 912 510 930 507 950 503 975 502 992 505 1010 511 1030 519 1050 527 1070 533 1093 533 1110 529 1130 521 1145 513 1160 504 1180 493 1192 489 1210 486 1230 486 1260 488 1290 491 1316 491";

const RED = "#ff0000", BLUE = "#0000ff", PURPLE = "#800080";
const WICK = { [RED]: "#c80010", [BLUE]: "#0000a0", [PURPLE]: "#600070" };
const LEFT = 74, STEP = 7, TOP = 129, BASE = 681;

function colour(i) {
  if (i === 29 || (i > 62 && i < 66) || i === 99 || i === 111 || i === 122) return PURPLE;
  if ((i > 29 && i < 63) || (i > 111 && i < 122) || i > 141) return RED;
  return BLUE;
}

// Catmull-Rom spline through a flat list of coordinates.
function spline(text) {
  const n = text.split(" ").map(Number), p = [];
  for (let i = 0; i < n.length; i += 2) p.push([n[i], n[i + 1] + 0.5]);
  let d = `M${p[0]}`;
  for (let i = 0; i < p.length - 1; i++) {
    const a = p[i - 1] || p[i], b = p[i], c = p[i + 1], e = p[i + 2] || c;
    d += `C${b[0] + (c[0] - a[0]) / 6} ${b[1] + (c[1] - a[1]) / 6} ${c[0] - (e[0] - b[0]) / 6} ${c[1] - (e[1] - b[1]) / 6} ${c[0]} ${c[1]}`;
  }
  return d;
}

const out = [`<g transform="translate(0 -${TOP})">`];
out.push(`<line x1="71" x2="100%" y1="142.500" y2="142.500" stroke="#a0a0a0"/>`);
["11-25", "12-09", "12-23", "01-09", "01-30", "02-13", "02-27", "03-13", "03-27", "04-11", "04-25", "05-12", "05-26", "06-09", "06-27", "07-11", "07-25", "08-08", "08-22"]
  .forEach((t, i) => out.push(`<text class="axis" x="${i ? 71 + i * 70 : 81}" y="140">${t}</text>`));
[602, 624, 643, 662].forEach(y => out.push(`<line x1="71" x2="100%" y1="${y}.500" y2="${y}.500" stroke="#a0a0a0" stroke-dasharray="4 3"/>`));
[["10.1800", 600], ["371066", 628], ["247377", 647], ["123689", 666]]
  .forEach(([t, y]) => out.push(`<text class="scale" x="69" y="${y}">${t}</text>`));

volumes.forEach((v, i) => {
  const x = LEFT - 3 + i * STEP, h = +v.slice(1);
  out.push(v[0] === "g"
    ? `<rect x="${x}" y="${BASE - h}" width="6" height="${h}" fill="#008000"/>`
    : `<rect x="${x + 0.5}" y="${BASE - h + 0.5}" width="5" height="${h - 1}" fill="#fff" stroke="#b81020"/>`);
});
candles.forEach(([a, b, c, d], i) => {
  const x = LEFT + i * STEP, f = colour(i);
  out.push(`<rect x="${x}" y="${c}" width="1" height="${d - c}" fill="${WICK[f]}"/><rect x="${x - 4}" y="${a}" width="8" height="${b - a}" fill="${b - a > 1 ? f : WICK[f]}"/>`);
});
out.push(`<path d="${spline(watchLine)}" fill="none" stroke="#c01020"/>`);
out.push(`<path d="${spline(exitLine)}" fill="none" stroke="#007878"/><line x1="1190" x2="100%" y1="492.500" y2="492.500" stroke="#007878"/>`);
out.push(`<line x1="1149" x2="1180" y1="492.500" y2="492.500" stroke="#999" stroke-dasharray="6 2"/>`);
out.push(`<path d="M445 160.500 465 165.500M257 602.500 276 597.500" stroke="#0000a0"/>`);
out.push(`<text class="peak" x="465" y="176">21.5000</text><text class="peak" x="276" y="600">10.1800</text>`);
out.push(`<path d="M1098 157H1106L1102 161Z" fill="#000"/>`);
out.push(`<text class="legend" x="3" y="147" fill="#0000c0">日K线</text><text class="legend" x="71" y="155">乾坤K线</text>`);
out.push(`<text class="legend" x="139" y="155" fill="#c00018">关注线<tspan class="small">=12.032</tspan></text><text class="legend" x="218" y="155" fill="#007878">出局线<tspan class="small">=13.348</tspan></text>`);
out.push(`<text class="code" x="100%" y="155">300340 <tspan class="large">科恒股份</tspan></text></g>`);
document.getElementById("plot").innerHTML = out.join("");
```
